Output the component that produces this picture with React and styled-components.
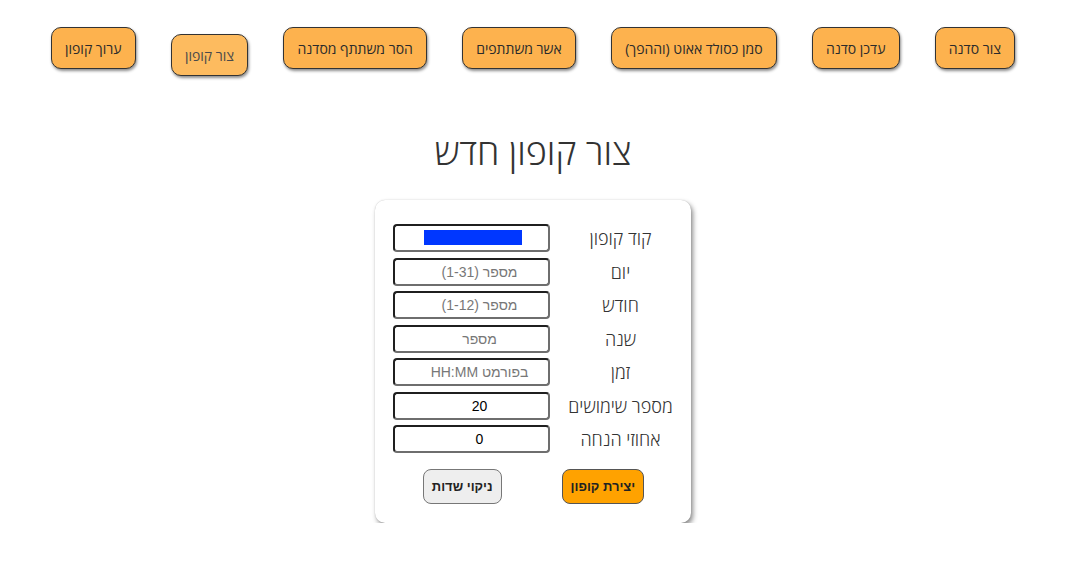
import React from "react";
import styled, { createGlobalStyle } from "styled-components";

const Global = createGlobalStyle`
  html, body { margin: 0; padding: 0; background: #fff; }
  body { font-family: "Open Sans", "Liberation Sans", sans-serif; color: #333; }
`;

const Page = styled.div`
  width: 1066px;
  direction: rtl;
  padding-top: 27px;
`;

const Nav = styled.nav`
  display: flex;
  justify-content: center;
  align-items: flex-start;
  gap: 35px;
  height: 50px;
`;

const NavButton = styled.button`
  height: 42px;
  margin-top: ${(p) => (p.$active ? "7px" : "0")};
  padding: 0 13.2px;
  font-family: "Open Sans", "Liberation Sans", sans-serif;
  font-size: 14px;
  color: ${(p) => (p.$active ? "#4a4a4a" : "#2b2b2b")};
  background: ${(p) => (p.$active ? "#fdbb5f" : "#fdb24e")};
  border: 1px solid #333;
  border-radius: 10px;
  box-shadow: 1px 2px 3px rgba(0, 0, 0, 0.45);
  white-space: nowrap;
  cursor: pointer;
`;

const Title = styled.h1`
  margin: 50px 0 0;
  text-align: center;
  font-family: "Open Sans", "Liberation Sans", sans-serif;
  font-weight: 300;
  font-size: 36px;
  line-height: 50px;
  color: #333;
`;

const Card = styled.div`
  width: 316px;
  box-sizing: border-box;
  margin: 23px auto 0;
  padding: 24px 17px 19px 18px;
  background: #fff;
  border-radius: 10px;
  box-shadow: 2px 3px 5px rgba(0, 0, 0, 0.45), 0 0 1px rgba(0, 0, 0, 0.25);
`;

const Form = styled.div`
  display: grid;
  grid-template-columns: 1fr 157px;
  column-gap: 17px;
  row-gap: 5.5px;
  align-items: center;
`;

const Label = styled.label`
  text-align: center;
  font-family: "Open Sans", "Liberation Sans", sans-serif;
  font-weight: 300;
  font-size: 18px;
  color: #333;
  white-space: nowrap;
`;

const Input = styled.input`
  box-sizing: border-box;
  width: 157px;
  height: 28px;
  padding: 1px 2px 1px 18px;
  border-style: solid;
  border-width: 2px;
  border-color: #1f1f1f #6e6e6e #6e6e6e #1f1f1f;
  border-radius: 4px;
  text-align: center;
  font-family: "Liberation Sans", Arial, sans-serif;
  font-size: 14px;
  color: #000;
  background: ${(p) =>
    p.$selected
      ? "#fff linear-gradient(#0037ff, #0037ff) no-repeat 29px 4px / 98px 15px"
      : "#fff"};
  outline: none;
  &::placeholder { color: #777; }
`;

const Actions = styled.div`
  display: flex;
  justify-content: center;
  gap: 60px;
  margin-top: 16px;
`;

const ActionButton = styled.button`
  height: 35px;
  padding: 0 8px;
  font-family: "Liberation Sans", Arial, sans-serif;
  font-weight: bold;
  font-size: 13px;
  color: #222;
  background: ${(p) => (p.$primary ? "#ffa200" : "#eeeeee")};
  border: 1px solid ${(p) => (p.$primary ? "#555" : "#777")};
  border-radius: 8px;
  cursor: pointer;
`;

const navItems = [
  "צור סדנה",
  "עדכן סדנה",
  "סמן כסולד אאוט (וההפך)",
  "אשר משתתפים",
  "הסר משתתף מסדנה",
  "צור קופון",
  "ערוך קופון",
];

const fields = [
  { label: "קוד קופון", selected: true },
  { label: "יום", placeholder: "מספר (1-31)" },
  { label: "חודש", placeholder: "מספר (1-12)" },
  { label: "שנה", placeholder: "מספר" },
  { label: "זמן", placeholder: "בפורמט HH:MM" },
  { label: "מספר שימושים", value: "20" },
  { label: "אחוזי הנחה", value: "0" },
];

export default function App() {
  return (
    <>
      <Global />
      <Page>
        <Nav>
          {navItems.map((t) => (
            <NavButton key={t} $active={t === "צור קופון"}>
              {t}
            </NavButton>
          ))}
        </Nav>
        <Title>צור קופון חדש</Title>
        <Card>
          <Form>
            {fields.map((f) => (
              <React.Fragment key={f.label}>
                <Label>{f.label}</Label>
                <Input
                  $selected={f.selected}
                  placeholder={f.placeholder}
                  defaultValue={f.value}
                />
              </React.Fragment>
            ))}
          </Form>
          <Actions>
            <ActionButton $primary>יצירת קופון</ActionButton>
            <ActionButton>ניקוי שדות</ActionButton>
          </Actions>
        </Card>
      </Page>
    </>
  );
}
